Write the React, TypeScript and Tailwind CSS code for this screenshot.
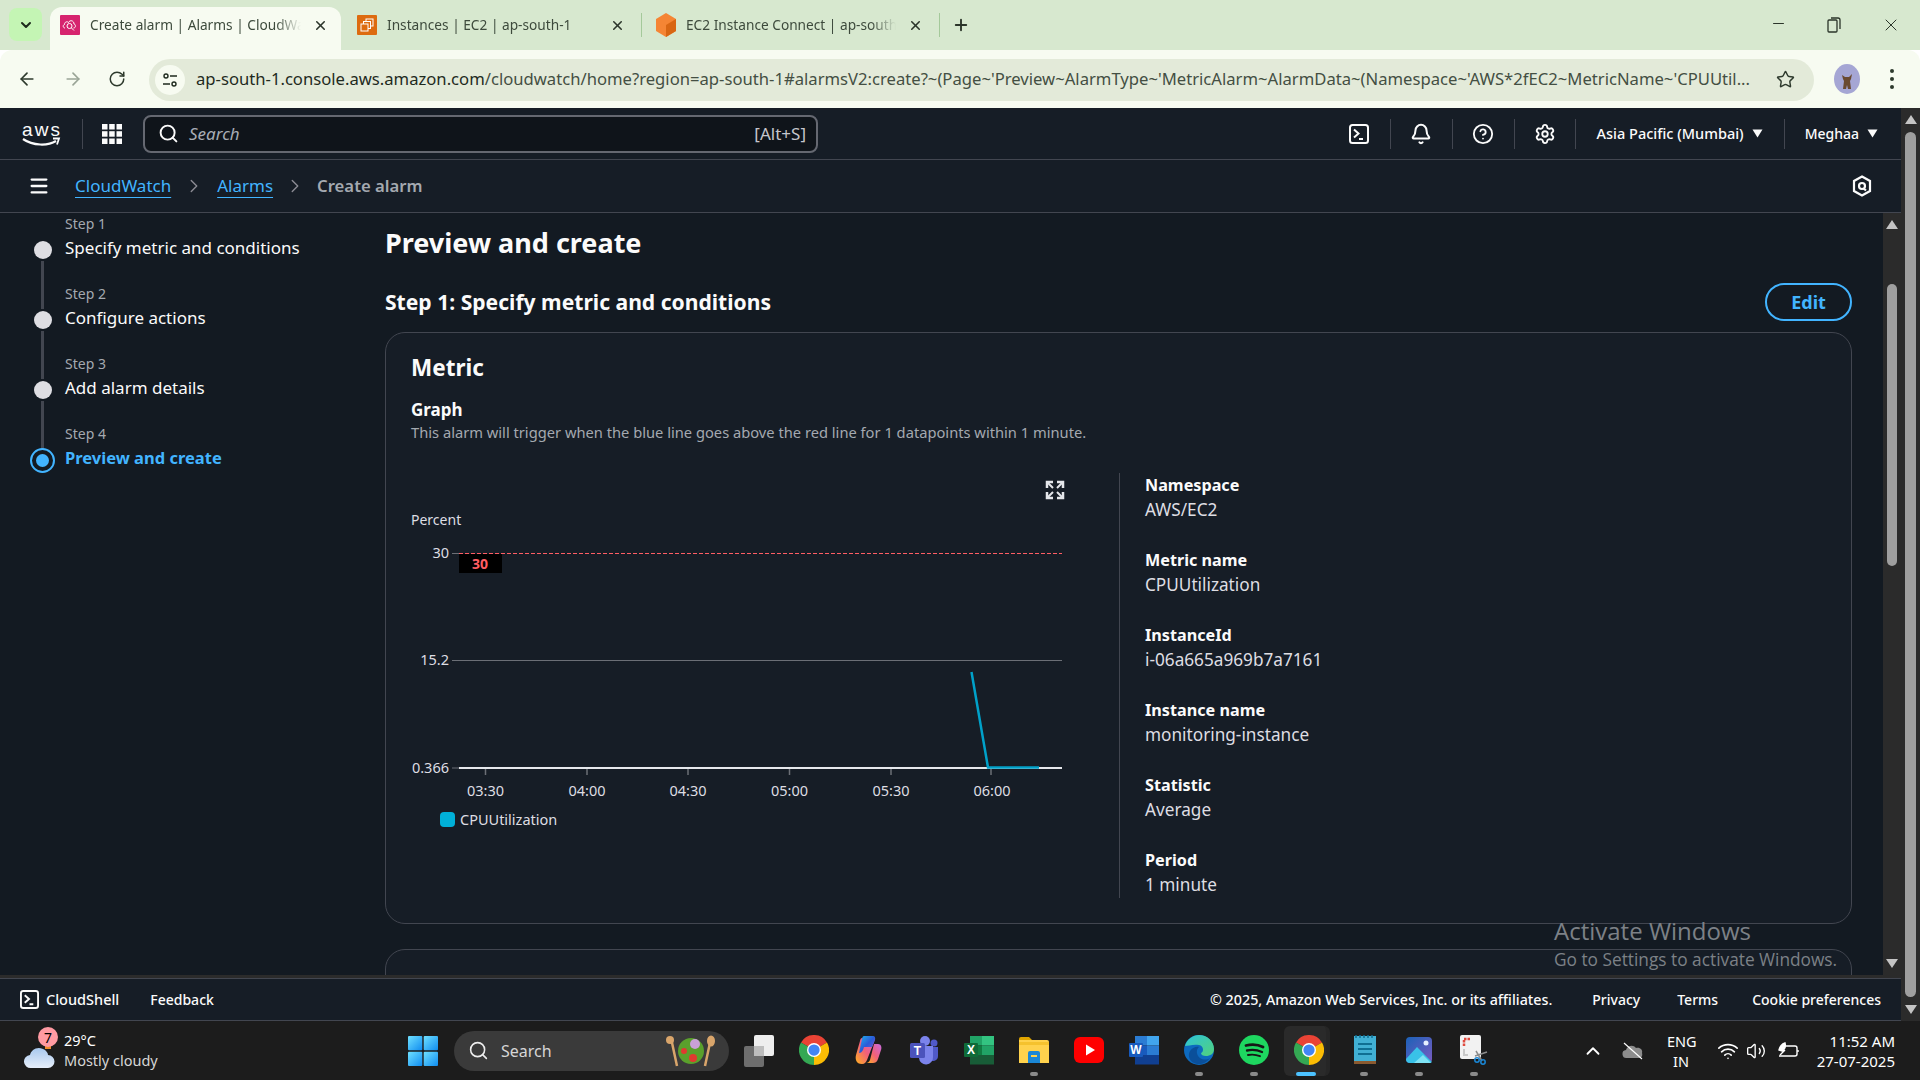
import React from "react";
import { ArrowLeft, ArrowRight, RotateCw, Star, Search, Bell, CircleHelp, Settings, Menu, ChevronRight, X, Plus, Minus, ChevronDown, ChevronUp, Wifi, Volume2 } from "lucide-react";

const TerminalIcon = ({ size = 20 }: { size?: number }) => (
  <svg width={size} height={size} viewBox="0 0 20 20" fill="none" stroke="#fbfbfb" strokeWidth="2">
    <rect x="1" y="1" width="18" height="18" rx="2.5" />
    <path d="M5 5.5 9.5 9.5 5 13.5M10 15h4" />
  </svg>
);

const Triangle = () => (
  <svg width="11" height="9" viewBox="0 0 11 9" className="shrink-0"><path d="M0.5 0.5h10L5.5 8.5z" fill="#fbfbfb" /></svg>
);

const NavSep = () => <div className="w-px h-[30px] bg-[#424650] shrink-0" />;

const CloudWatchFav = () => (
  <svg width="20" height="20" viewBox="0 0 20 20" className="shrink-0">
    <rect width="20" height="20" rx="1" fill="#d6246e" />
    <path d="M5 13c-2 0-2.500-3-.5-3.500C4.500 7 7 6 8.500 7.500 10 4.500 14 5.500 14 9c2 .5 2 4-.5 4" fill="none" stroke="#fff" strokeWidth="1" />
    <circle cx="9.500" cy="11" r="2.500" fill="none" stroke="#fff" strokeWidth="1" />
    <path d="M11.500 13l2.500 2.500" stroke="#fff" />
  </svg>
);

const Ec2Fav = () => (
  <svg width="20" height="20" viewBox="0 0 20 20" className="shrink-0">
    <rect width="20" height="20" rx="1" fill="#dd6b10" />
    <rect x="9" y="4" width="7" height="7" fill="none" stroke="#fff" />
    <rect x="6.500" y="6.500" width="7" height="7" fill="#dd6b10" stroke="#fff" />
    <rect x="4" y="9" width="7" height="7" fill="#dd6b10" stroke="#fff" />
  </svg>
);

const CubeFav = () => (
  <svg width="20" height="24" viewBox="0 0 20 24" className="shrink-0">
    <path d="M10 0 20 6v12l-10 6-10-6V6z" fill="#f58534" />
    <path d="M10 12 20 6v12l-10 6z" fill="#d86613" />
  </svg>
);

const Tab = ({ icon, title, active, width, pl }: { icon: React.ReactNode; title: string; active?: boolean; width: string; pl: string }) => (
  <div className={`flex items-center h-[43px] pb-[7px] ${width} ${pl} ${active ? "bg-[#f7fbf1] rounded-t-xl" : ""}`}>
    {icon}
    <div className="ml-[10px] flex-1 overflow-hidden whitespace-nowrap text-[13.700px] text-[#3d4a3c] [mask-image:linear-gradient(to_right,black_88%,transparent)]">{title}</div>
    <X size={15} strokeWidth={2.500} className={`ml-[12px] text-[#2b352a] shrink-0 ${active ? "mr-[13px]" : "mr-[16px]"}`} />
  </div>
);

const Browser = () => (
  <div className="shrink-0">
    <div className="h-[50px] bg-[#d7e8cf] flex items-end relative">
      <div className="absolute left-[9px] top-[8px] w-[33px] h-[33px] rounded-lg bg-[#c4f5b4] flex items-center justify-center">
        <ChevronDown size={16} strokeWidth={3} className="text-[#1d2b1c]" />
      </div>
      <div className="ml-[50px] flex items-center">
        <Tab active icon={<CloudWatchFav />} title="Create alarm | Alarms | CloudWatch" width="w-[291px]" pl="pl-[10px]" />
        <div className="w-[16px]" />
        <Tab icon={<Ec2Fav />} title="Instances | EC2 | ap-south-1" width="w-[284px]" pl="pl-0" />
        <div className="w-px h-[24px] bg-[#a4c99a] -mt-[7px]" />
        <div className="w-[14px]" />
        <Tab icon={<CubeFav />} title="EC2 Instance Connect | ap-south-1" width="w-[283px]" pl="pl-0" />
        <div className="w-px h-[24px] bg-[#a4c99a] -mt-[7px]" />
        <Plus size={18} strokeWidth={2.500} className="ml-[12px] text-[#2b352a] -mt-[7px]" />
      </div>
      <div className="ml-auto self-start h-[50px] flex items-center text-[#2b352a]">
        <Minus size={17} strokeWidth={1.500} className="mr-[40px] -mt-[3px]" />
        <svg width="14" height="16" viewBox="0 0 14 16" fill="none" stroke="#2b352a" strokeWidth="1.300" className="mr-[40px]"><rect x="1" y="3" width="9" height="12" rx="1" /><path d="M4 1h7a2 2 0 0 1 2 2v9" /></svg>
        <X size={20} strokeWidth={1.200} className="mr-[19px]" />
      </div>
    </div>
    <div className="h-[58px] bg-[#f7fbf1] flex items-center rounded-t-xl relative text-[#2e3a2d]">
      <ArrowLeft size={20} className="ml-[17px] shrink-0" />
      <ArrowRight size={20} className="ml-[26px] shrink-0 text-[#9aa597]" />
      <RotateCw size={18} className="ml-[25px] shrink-0" />
      <div className="ml-[23px] w-[1665px] h-[42px] mt-px rounded-full bg-[#e3ead9] flex items-center shrink-0">
        <div className="ml-[6px] w-[30px] h-[30px] rounded-full bg-[#f7fbf1] flex items-center justify-center shrink-0">
          <svg width="16" height="16" viewBox="0 0 16 16" fill="none" stroke="#1f2a1e" strokeWidth="1.400"><circle cx="4" cy="4" r="2" /><path d="M8 4h7M1 12h7" /><circle cx="12" cy="12" r="2" /></svg>
        </div>
        <div className="ml-[11px] w-[1565px] overflow-hidden whitespace-nowrap text-[16.650px] text-[#1f2a1e]">
          ap-south-1.console.aws.amazon.com<span className="text-[#444f43]">/cloudwatch/home?region=ap-south-1#alarmsV2:create?~(Page~'Preview~AlarmType~'MetricAlarm~AlarmData~(Namespace~'AWS*2fEC2~MetricName~'CPUUtil...</span>
        </div>
        <Star size={19} strokeWidth={1.800} className="ml-auto mr-[19px] shrink-0" />
      </div>
      <svg width="26" height="30" viewBox="0 0 26 30" className="ml-[20px] shrink-0">
        <ellipse cx="13" cy="15" rx="13" ry="15" fill="#a5a6d4" />
        <path d="M8 11l3 2h4l3-3-1 5-1 2 1 8h-3l-1-4-1 4H9l1-8-1-2z" fill="#6a4a30" />
      </svg>
      <svg width="6" height="22" viewBox="0 0 6 22" className="ml-[29px] shrink-0" fill="#2e3a2d"><circle cx="3" cy="3" r="2" /><circle cx="3" cy="11" r="2" /><circle cx="3" cy="19" r="2" /></svg>
    </div>
  </div>
);

const TopNav = () => (
  <div className="h-[52px] bg-[#161d26] border-b border-[#424650] flex items-center shrink-0 text-[#fbfbfb]">
    <svg width="38" height="26" viewBox="0 0 38 26" className="ml-[22px] shrink-0 overflow-visible">
      <text x="0" y="15" fontFamily="'Liberation Sans', sans-serif" fontSize="19" fill="#fbfbfb" textLength="38">aws</text>
      <path d="M1 18c10 7 25 7 33 2" fill="none" stroke="#fbfbfb" strokeWidth="2.200" />
      <path d="M31 17.500h6l-2 6" fill="none" stroke="#fbfbfb" strokeWidth="1.800" />
    </svg>
    <div className="ml-[22px]"><NavSep /></div>
    <svg width="20" height="20" viewBox="0 0 20 20" fill="#fbfbfb" className="ml-[19px] shrink-0">
      <rect x="0" y="0" width="5.500" height="5.500" /><rect x="7.200" y="0" width="5.500" height="5.500" /><rect x="14.500" y="0" width="5.500" height="5.500" />
      <rect x="0" y="7.200" width="5.500" height="5.500" /><rect x="7.200" y="7.200" width="5.500" height="5.500" /><rect x="14.500" y="7.200" width="5.500" height="5.500" />
      <rect x="0" y="14.500" width="5.500" height="5.500" /><rect x="7.200" y="14.500" width="5.500" height="5.500" /><rect x="14.500" y="14.500" width="5.500" height="5.500" />
    </svg>
    <div className="ml-[21px] w-[675px] h-[38px] rounded-lg border-2 border-[#656871] bg-[#0f141a] flex items-center shrink-0">
      <Search size={21} strokeWidth={2.200} className="ml-[13px] text-[#fbfbfb]" />
      <span className="ml-[10px] italic text-[17px] text-[#a8adb5]">Search</span>
      <span className="ml-auto mr-[10px] text-[17px] text-[#c6c6cd]">[Alt+S]</span>
    </div>
    <div className="ml-auto flex items-center mr-[23px]">
      <TerminalIcon />
      <div className="ml-[21px]"><NavSep /></div>
      <Bell size={22} strokeWidth={2.200} className="ml-[19px]" />
      <div className="ml-[20px]"><NavSep /></div>
      <CircleHelp size={22} strokeWidth={2} className="ml-[19px]" />
      <div className="ml-[20px]"><NavSep /></div>
      <Settings size={22} strokeWidth={2} className="ml-[19px]" />
      <div className="ml-[19px]"><NavSep /></div>
      <span className="ml-[21px] text-[14.500px] font-medium whitespace-nowrap">Asia Pacific (Mumbai)</span>
      <span className="ml-[8px]"><Triangle /></span>
      <div className="ml-[21px]"><NavSep /></div>
      <span className="ml-[20px] text-[14px] font-medium">Meghaa</span>
      <span className="ml-[8px]"><Triangle /></span>
    </div>
  </div>
);

const Crumb = ({ children }: { children: string }) => (
  <a className="text-[#42b4ff] underline underline-offset-[5px] decoration-1 text-[17px]">{children}</a>
);

const Breadcrumbs = () => (
  <div className="h-[53px] bg-[#161d26] border-b border-[#424650] flex items-center shrink-0 text-[#fbfbfb]">
    <Menu size={22} strokeWidth={2.500} className="ml-[28px]" />
    <div className="ml-[25px]"><Crumb>CloudWatch</Crumb></div>
    <ChevronRight size={22} strokeWidth={1.500} className="mx-[12px] text-[#8c8c94]" />
    <Crumb>Alarms</Crumb>
    <ChevronRight size={22} strokeWidth={1.500} className="mx-[11px] text-[#8c8c94]" />
    <span className="text-[16.700px] font-semibold text-[#a4a9b0]">Create alarm</span>
    <svg width="20" height="22" viewBox="0 0 20 22" fill="none" stroke="#fbfbfb" strokeWidth="2.200" className="ml-auto mr-[29px]">
      <path d="M10 1.500 18 6v10l-8 4.500L2 16V6z" />
      <circle cx="10" cy="11" r="3" />
      <path d="M11.500 13.500l2.500 2" />
    </svg>
  </div>
);

const steps = [
  { label: "Step 1", title: "Specify metric and conditions" },
  { label: "Step 2", title: "Configure actions" },
  { label: "Step 3", title: "Add alarm details" },
  { label: "Step 4", title: "Preview and create", current: true },
];

const Sidebar = () => (
  <div className="w-[385px] shrink-0 pt-px">
    {steps.map((s, i) => (
      <div key={s.label} className="flex h-[70px]">
        <div className="w-[65px] h-[70px] flex flex-col items-center pl-[20px] shrink-0">
          {s.current ? (
            <div className="mt-[24px] w-[25px] h-[25px] rounded-full border-2 border-[#42b4ff] flex items-center justify-center shrink-0">
              <div className="w-[13px] h-[13px] rounded-full bg-[#42b4ff]" />
            </div>
          ) : (
            <div className="mt-[27px] w-[18px] h-[18px] rounded-full bg-[#dedee3] shrink-0" />
          )}
          {i < 3 && <div className="mt-[2px] w-[3px] h-[48px] bg-[#424650] shrink-0" />}
        </div>
        <div>
          <div className="text-[14px] leading-[20px] text-[#a4a9b0]">{s.label}</div>
          <div className={`mt-[2px] leading-[24px] whitespace-nowrap ${s.current ? "text-[16.500px] text-[#42b4ff] font-bold" : "text-[17px] text-[#fbfbfb]"}`}>{s.title}</div>
        </div>
      </div>
    ))}
  </div>
);

const ChartPanel = () => (
  <svg width="708" height="425" viewBox="411 473 708 425" className="block shrink-0" fontFamily="'Noto Sans', sans-serif">
    <g fill="none" stroke="#e5e7eb">
      <path d="M1047 488v-6h6M1063 488v-6h-6M1047 492v6h6M1063 492v6h-6" strokeWidth="2.500" />
      <path d="M1048 483l5 5M1062 483l-5 5M1048 497l5-5M1062 497l-5-5" strokeWidth="2" />
    </g>
    <text x="411" y="525" fontSize="14" fill="#dedee3">Percent</text>
    <g fontSize="14.500" fill="#dedee3" textAnchor="end">
      <text x="449" y="558">30</text>
      <text x="449" y="665">15.2</text>
      <text x="449" y="773">0.366</text>
    </g>
    <path d="M452 553.500h8M452 660.500h610M452 768h8" stroke="#6b6f76" strokeWidth="1" />
    <path d="M459 553.500h603" stroke="#ff5d64" strokeWidth="1.200" strokeDasharray="4 2" />
    <rect x="459" y="554" width="43" height="19" fill="#000" />
    <text x="480" y="569" fontSize="14" fontWeight="700" fill="#ff5d64" textAnchor="middle">30</text>
    <path d="M459 768h603" stroke="#e5e7eb" strokeWidth="2" />
    <g stroke="#6b6f76" strokeWidth="1.500">
      <path d="M485.500 769v6M587 769v6M688 769v6M789.500 769v6M891 769v6M991 769v6" />
    </g>
    <g fontSize="14.500" fill="#dedee3" textAnchor="middle">
      <text x="485.500" y="796">03:30</text>
      <text x="587" y="796">04:00</text>
      <text x="688" y="796">04:30</text>
      <text x="789.500" y="796">05:00</text>
      <text x="891" y="796">05:30</text>
      <text x="992" y="796">06:00</text>
    </g>
    <path d="M971.500 672 988 767.500h51" fill="none" stroke="#00a1c9" strokeWidth="2.500" />
    <rect x="440" y="812" width="15" height="15" rx="4" fill="#00b0d8" />
    <text x="460" y="825" fontSize="14.500" fill="#dedee3">CPUUtilization</text>
  </svg>
);

const details = [
  ["Namespace", "AWS/EC2"],
  ["Metric name", "CPUUtilization"],
  ["InstanceId", "i-06a665a969b7a7161"],
  ["Instance name", "monitoring-instance"],
  ["Statistic", "Average"],
  ["Period", "1 minute"],
];

const MainContent = () => (
  <div className="flex-1 min-w-0 pr-[31px] overflow-hidden">
    <h1 className="mt-[12px] text-[27px] leading-[36px] font-bold text-[#fbfbfb]">Preview and create</h1>
    <div className="mt-[22px] flex items-center justify-between h-[38px]">
      <h2 className="text-[21.100px] font-bold text-[#fbfbfb] -mt-px">Step 1: Specify metric and conditions</h2>
      <button className="w-[87px] h-[38px] rounded-[20px] border-2 border-[#42b4ff] text-[18px] font-bold text-[#42b4ff]">Edit</button>
    </div>
    <div className="mt-[11px] rounded-[20px] border border-[#424650] bg-[#161d26] pl-[25px] pt-[19px] pb-[25px]">
      <h3 className="text-[22.500px] leading-[32px] font-bold text-[#fbfbfb]">Metric</h3>
      <div className="mt-[15px] text-[17px] leading-[22px] font-bold text-[#fbfbfb]">Graph</div>
      <div className="mt-[1px] text-[14.700px] leading-[20px] text-[#a4a9b0]">This alarm will trigger when the blue line goes above the red line for 1 datapoints within 1 minute.</div>
      <div className="mt-[31px] flex">
        <ChartPanel />
        <div className="border-l border-[#424650] pl-[25px] flex flex-col gap-[26px]">
          {details.map(([k, v]) => (
            <div key={k}>
              <div className="text-[16.200px] leading-[24px] font-bold text-[#fbfbfb]">{k}</div>
              <div className="mt-px text-[17.200px] leading-[24px] text-[#dedee3]">{v}</div>
            </div>
          ))}
        </div>
      </div>
    </div>
    <div className="mt-[25px] h-[60px] rounded-t-[20px] border border-[#424650] bg-[#161d26]" />
  </div>
);

const ScrollArrow = ({ up }: { up?: boolean }) => (
  <svg width="12" height="9" viewBox="0 0 12 9" className="shrink-0">
    <path d={up ? "M6 0 12 9H0z" : "M0 0h12L6 9z"} fill="#c4c4c4" />
  </svg>
);

const Footer = () => (
  <div className="h-[43px] bg-[#161d26] border-t border-b border-[#424650] mt-[3px] flex items-center shrink-0 text-[14px] font-medium text-[#fbfbfb]">
    <div className="ml-[20px]"><TerminalIcon size={19} /></div>
    <span className="ml-[7px] text-[14.500px]">CloudShell</span>
    <span className="ml-[31px]">Feedback</span>
    <span className="ml-auto text-[14.300px]">© 2025, Amazon Web Services, Inc. or its affiliates.</span>
    <span className="ml-[40px]">Privacy</span>
    <span className="ml-[37px]">Terms</span>
    <span className="ml-[34px] mr-[20px]">Cookie preferences</span>
  </div>
);

const Chrome = () => (
  <svg width="30" height="30" viewBox="0 0 24 24">
    <path d="M12 12 1.600 6A12 12 0 0 1 22.400 6z" fill="#ea4335" />
    <path d="M12 12 22.400 6A12 12 0 0 1 12 24z" fill="#fbbc04" />
    <path d="M12 12 12 24A12 12 0 0 1 1.600 6z" fill="#34a853" />
    <circle cx="12" cy="12" r="5.600" fill="#fff" />
    <circle cx="12" cy="12" r="4.500" fill="#4285f4" />
  </svg>
);

const Copilot = () => (
  <svg width="30" height="30" viewBox="0 0 30 30">
    <defs>
      <linearGradient id="cp1" x1="0" y1="0" x2="1" y2="1"><stop offset="0" stopColor="#1fb5f0" /><stop offset="0.5" stopColor="#2a5bd8" /><stop offset="1" stopColor="#8a5bd8" /></linearGradient>
      <linearGradient id="cp2" x1="0" y1="1" x2="1" y2="0"><stop offset="0" stopColor="#ffb21f" /><stop offset="0.5" stopColor="#f2607a" /><stop offset="1" stopColor="#c86be0" /></linearGradient>
    </defs>
    <path d="M8 2h10c2 0 3 2 2 4l-7 18c-1 2-2 4-5 4-6 0-7-5-6-9L6 5c.300-2 1-3 2-3z" fill="url(#cp2)" transform="translate(0 1)" />
    <path d="M10 1h9c2 0 2.500 2 2 4l-3 7H10l-1 3c-1 2-2 3-4 3L8 4c.300-2 1-3 2-3z" fill="url(#cp1)" />
    <path d="M20 9h4c3 0 4 3 3 6l-3 9c-1 3-3 4-5 4h-7c2 0 3-1 4-3z" fill="url(#cp2)" />
  </svg>
);

const Teams = () => (
  <svg width="30" height="30" viewBox="0 0 30 30">
    <circle cx="16" cy="6" r="5" fill="#7b83eb" />
    <circle cx="25" cy="8" r="3.500" fill="#5059c9" />
    <path d="M20 12h9v9a5 5 0 0 1-9 3z" fill="#5059c9" />
    <path d="M9 11h15v11a7 7 0 0 1-14 1z" fill="#7b83eb" />
    <rect x="1" y="8" width="15" height="15" rx="1.500" fill="#4b53bc" />
    <text x="8.500" y="20" fontFamily="'Liberation Sans', sans-serif" fontWeight="700" fontSize="12" fill="#fff" textAnchor="middle">T</text>
  </svg>
);

const OfficeDoc = ({ tiles, badge, letter }: { tiles: string[]; badge: string; letter: string }) => (
  <svg width="30" height="30" viewBox="0 0 30 30">
    <rect x="6" y="1" width="12" height="9.500" fill={tiles[0]} />
    <rect x="18" y="1" width="12" height="9.500" fill={tiles[1]} />
    <rect x="6" y="10.500" width="12" height="9.500" fill={tiles[2]} />
    <rect x="18" y="10.500" width="12" height="9.500" fill={tiles[3]} />
    <rect x="6" y="20" width="24" height="9.500" fill={tiles[4]} />
    <rect x="0" y="8" width="14" height="14" rx="1" fill={badge} />
    <text x="7" y="19" fontFamily="'Liberation Sans', sans-serif" fontWeight="700" fontSize="12" fill="#fff" textAnchor="middle">{letter}</text>
  </svg>
);

const Explorer = () => (
  <svg width="30" height="30" viewBox="0 0 30 30">
    <path d="M0 4a2 2 0 0 1 2-2h8l3 3h-13z" fill="#e0a500" />
    <path d="M0 5h28a2 2 0 0 1 2 2v21H0z" fill="#ffd24d" />
    <path d="M0 7h30v3H0z" fill="#f5c22e" />
    <path d="M9 18a2 2 0 0 1 2-2h8a2 2 0 0 1 2 2v10H9z" fill="#1a87d6" />
    <rect x="12" y="20" width="6" height="2" fill="#ffd24d" />
  </svg>
);

const YouTube = () => (
  <svg width="30" height="30" viewBox="0 0 30 30">
    <rect x="0" y="2" width="30" height="26" rx="6" fill="#f00" />
    <path d="M12 9.500 21 15l-9 5.500z" fill="#fff" />
  </svg>
);

const Edge = () => (
  <svg width="30" height="30" viewBox="0 0 30 30">
    <defs>
      <linearGradient id="ed1" x1="0" y1="0" x2="1" y2="1"><stop offset="0" stopColor="#2ec4d6" /><stop offset="1" stopColor="#52d17c" /></linearGradient>
    </defs>
    <circle cx="15" cy="15" r="15" fill="#0d6abf" />
    <path d="M1 11C3 4 9 0 15 0c8 0 15 6 15 14 0 5-4 7-8 7-3 0-5-1-5-3 3-1 3-7-2-8-6-1-11 1-14 1z" fill="url(#ed1)" />
    <path d="M13 29C6 28 3 21 6 16c2-3 6-5 9-4-3 2-3 8 1 11 3 2 7 2 10 0-3 4-8 7-13 6z" fill="#0a4f9a" />
  </svg>
);

const Spotify = () => (
  <svg width="30" height="30" viewBox="0 0 30 30" fill="none" stroke="#161616" strokeLinecap="round">
    <circle cx="15" cy="15" r="15" fill="#1ed760" stroke="none" />
    <path d="M7 10.500c6-1.500 12-1 17 1.500" strokeWidth="2.800" />
    <path d="M8 15.500c5-1 10-.7 15 1.500" strokeWidth="2.300" />
    <path d="M9 20c4-.800 8-.500 12 1.200" strokeWidth="1.900" />
  </svg>
);

const Notepad = () => (
  <svg width="30" height="30" viewBox="0 0 30 30">
    <rect x="5" y="1" width="22" height="28" fill="#41b0d4" />
    <rect x="5" y="26" width="22" height="3" fill="#8a5a30" />
    <path d="M9 9h14M9 14h14M9 19h14" stroke="#0f6f93" strokeWidth="2" />
    <path d="M7 0v3M11 0v3M15 0v3M19 0v3M23 0v3" stroke="#0f6f93" strokeWidth="1.500" />
  </svg>
);

const Photos = () => (
  <svg width="30" height="30" viewBox="0 0 30 30">
    <defs>
      <linearGradient id="ph1" x1="0" y1="0" x2="1" y2="1"><stop offset="0" stopColor="#1b62b8" /><stop offset="1" stopColor="#7a5bc0" /></linearGradient>
    </defs>
    <rect x="2" y="2" width="26" height="26" rx="4" fill="url(#ph1)" />
    <circle cx="22" cy="8" r="2.500" fill="#e6f0ff" />
    <path d="M2 24 13 12l15 15a3 3 0 0 1-3 1H6a4 4 0 0 1-4-4z" fill="#39c2e8" />
    <path d="M10 28l9-8 8 8z" fill="#7fe3f5" />
  </svg>
);

const Snip = () => (
  <svg width="30" height="30" viewBox="0 0 30 30" fill="none">
    <rect x="1" y="0" width="21" height="24" rx="2" fill="#f2f2f2" />
    <path d="M5 11V4h7" stroke="#e04a3f" strokeWidth="2.500" strokeDasharray="2.500 1" />
    <path d="M5 14v6h4" stroke="#c9c9c9" strokeWidth="2" />
    <path d="M16 21l12-4M17 16l6 10" stroke="#8d8d8d" strokeWidth="1.500" />
    <circle cx="24" cy="27" r="2.200" stroke="#1a87d6" strokeWidth="1.500" />
    <circle cx="18" cy="25" r="2.200" stroke="#1a87d6" strokeWidth="1.500" />
  </svg>
);

const apps = [
  { icon: <Chrome /> },
  { icon: <Copilot /> },
  { icon: <Teams /> },
  { icon: <OfficeDoc tiles={["#21a366", "#33c481", "#107c41", "#21a366", "#185c37"]} badge="#0f6b38" letter="X" /> },
  { icon: <Explorer />, open: true },
  { icon: <YouTube /> },
  { icon: <OfficeDoc tiles={["#2b7cd3", "#41a5ee", "#185abd", "#2b7cd3", "#103f91"]} badge="#185abd" letter="W" /> },
  { icon: <Edge />, open: true },
  { icon: <Spotify />, open: true },
  { icon: <Chrome />, active: true },
  { icon: <Notepad />, open: true },
  { icon: <Photos />, open: true },
  { icon: <Snip />, open: true },
];

const Taskbar = () => (
  <div className="h-[59px] bg-[#1c1c1c] flex items-center shrink-0 text-white">
    <div className="w-[393px] shrink-0 flex items-center relative h-full">
      <svg width="32" height="26" viewBox="0 0 32 26" className="ml-[24px] mt-[10px] shrink-0">
        <defs><linearGradient id="cl1" x1="0" y1="0" x2="0" y2="1"><stop offset="0" stopColor="#a8c8ee" /><stop offset="1" stopColor="#e6eefa" /></linearGradient></defs>
        <path d="M21 0h6v6h-6z" fill="#f28a2e" />
        <path d="M7 25a6.500 6.500 0 0 1-1-13C7 7 13 3 19 6c3 1 5 4 5 6a6.500 6.500 0 0 1 0 13z" fill="url(#cl1)" />
      </svg>
      <div className="absolute left-[38px] top-[6px] w-[20px] h-[20px] rounded-full bg-[#ff9aa2] text-black text-[14px] flex items-center justify-center">7</div>
      <div className="ml-[8px] leading-[20px] -mt-[2px]">
        <div className="text-[14.500px]">29°C</div>
        <div className="text-[14.500px] text-[#d6d6d6]">Mostly cloudy</div>
      </div>
    </div>
    <div className="w-[60px] flex justify-center shrink-0">
      <svg width="30" height="30" viewBox="0 0 30 30">
        <defs><linearGradient id="win" x1="0" y1="0" x2="1" y2="1"><stop offset="0" stopColor="#6fe0ff" /><stop offset="1" stopColor="#0f8cf0" /></linearGradient></defs>
        <rect x="0" y="0" width="14.300" height="14.300" rx="1" fill="url(#win)" />
        <rect x="15.700" y="0" width="14.300" height="14.300" rx="1" fill="url(#win)" />
        <rect x="0" y="15.700" width="14.300" height="14.300" rx="1" fill="url(#win)" />
        <rect x="15.700" y="15.700" width="14.300" height="14.300" rx="1" fill="url(#win)" />
      </svg>
    </div>
    <div className="ml-px w-[275px] h-[40px] rounded-full bg-[#3a3a3a] flex items-center shrink-0">
      <Search size={21} strokeWidth={1.800} className="ml-[14px] text-[#eeeeee]" />
      <span className="ml-[12px] text-[16px] text-[#d6d6d6]">Search</span>
      <svg width="54" height="34" viewBox="0 0 54 34" className="ml-auto mr-[11px]">
        <path d="M7 4l6 28M47 4l-6 28" stroke="#d9a56b" strokeWidth="2.500" />
        <circle cx="6" cy="6" r="4" fill="#d9a56b" />
        <ellipse cx="47" cy="7" rx="4" ry="5.500" fill="#d9a56b" />
        <circle cx="27" cy="17" r="13" fill="#5aa02c" />
        <circle cx="31" cy="10" r="5" fill="#c9a0d8" />
        <circle cx="29" cy="24" r="4" fill="#e03a2f" />
        <circle cx="20" cy="17" r="3" fill="#e03a2f" />
      </svg>
    </div>
    <div className="ml-[2px] w-[55px] flex justify-center shrink-0">
      <svg width="30" height="32" viewBox="0 0 30 32">
        <rect x="0" y="11" width="20" height="21" rx="2" fill="#6e6e6e" />
        <rect x="10" y="0" width="20" height="21" rx="2" fill="#eeeeee" />
        <rect x="10" y="11" width="10" height="10" fill="#bdbdbd" />
      </svg>
    </div>
    {apps.map((a, i) => (
      <div key={i} className="relative w-[55px] h-[59px] flex items-center justify-center shrink-0 -mt-[2px]">
        {a.active && <div className="absolute left-[3px] top-[6px] w-[46px] h-[50px] rounded-md bg-[#2a2a2a] border-r-4 border-[#262626]" />}
        <div className="relative flex">{a.icon}</div>
        {a.open && <div className="absolute left-[24px] bottom-[3px] w-[8px] h-[4px] rounded-full bg-[#8a8a8a]" />}
        {a.active && <div className="absolute left-[15px] bottom-[3px] w-[20px] h-[4px] rounded-full bg-[#4cc2ff]" />}
      </div>
    ))}
    <ChevronUp size={22} strokeWidth={2} className="ml-[81px] shrink-0" />
    <svg width="22" height="18" viewBox="0 0 22 18" className="ml-[18px] shrink-0">
      <path d="M5 16a4 4 0 0 1-1-8c1-4 7-6 10-2 4-1 7 2 6 5 1 3-1 5-3 5z" fill="#8d8d8d" />
      <path d="M2 1l18 16" stroke="#fff" strokeWidth="1.200" />
    </svg>
    <div className="ml-[23px] w-[28px] text-center text-[14.500px] leading-[20px] shrink-0">
      <div>ENG</div>
      <div>IN</div>
    </div>
    <Wifi size={22} strokeWidth={1.800} className="ml-[22px] shrink-0" />
    <Volume2 size={20} strokeWidth={1.600} className="ml-[7px] shrink-0" />
    <svg width="22" height="18" viewBox="0 0 22 18" fill="none" stroke="#fff" strokeWidth="1.400" className="ml-[11px] shrink-0">
      <path d="M6 4h12a2 2 0 0 1 2 2v6a2 2 0 0 1-2 2H2" />
      <path d="M21 8v2" />
      <path d="M2 8C3 4 5 2 8 1c1 3 0 6-3 8zM3 13l5-5" fill="#fff" />
    </svg>
    <div className="ml-auto mr-[25px] text-right text-[15px] leading-[20px] shrink-0">
      <div>11:52 AM</div>
      <div>27-07-2025</div>
    </div>
  </div>
);

export default function App() {
  return (
    <div className="w-[1920px] h-[1080px] flex flex-col overflow-hidden font-['Noto_Sans',sans-serif] relative">
      <Browser />
      <div className="h-[913px] flex shrink-0 bg-[#2b2b2b]">
        <div className="w-[1901px] shrink-0 flex flex-col">
          <TopNav />
          <Breadcrumbs />
          <div className="h-[762px] flex bg-[#131a22] shrink-0">
            <Sidebar />
            <MainContent />
            <div className="w-[18px] bg-[#2b2b2b] flex flex-col items-center shrink-0 py-[7px]">
              <ScrollArrow up />
              <div className="mt-[55px] w-[10px] h-[282px] rounded-full bg-[#9f9f9f] shrink-0" />
              <div className="mt-auto"><ScrollArrow /></div>
            </div>
          </div>
          <Footer />
        </div>
        <div className="w-[19px] flex flex-col items-center shrink-0 py-[7px]">
          <ScrollArrow up />
          <div className="mt-[8px] w-[11px] h-[865px] rounded-full bg-[#9f9f9f] shrink-0" />
          <div className="mt-auto"><ScrollArrow /></div>
        </div>
      </div>
      <Taskbar />
      {/* watermark sits over the page */}
      <div className="absolute left-[1554px] top-[915px] text-[#7c8187] font-['Open_Sans',sans-serif] pointer-events-none whitespace-nowrap">
        <div className="text-[24px] leading-[32px]">Activate Windows</div>
        <div className="text-[17.300px] leading-[24px] mt-px">Go to Settings to activate Windows.</div>
      </div>
    </div>
  );
}
